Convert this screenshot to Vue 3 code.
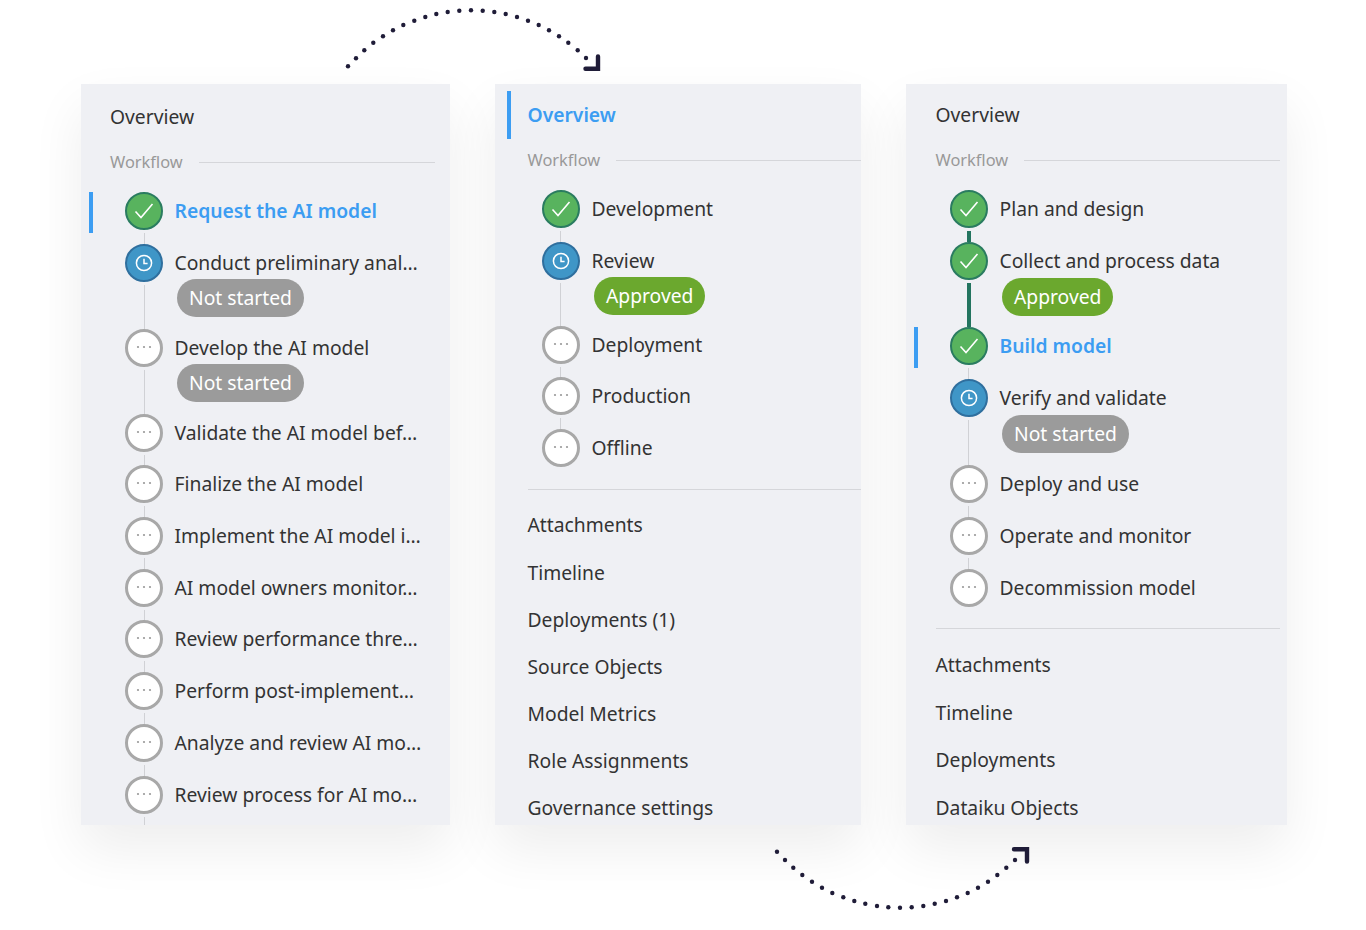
<template>
  <div class="page">
    <section v-for="panel in panels" :key="panel.id" class="panel" :class="panel.id">
      <div class="overview" :class="{ active: panel.overviewActive }">Overview</div>
      <div class="section-head">
        <span>Workflow</span>
        <i></i>
      </div>
      <ul class="steps">
        <li
          v-for="(step, i) in panel.steps"
          :key="step.label"
          class="step"
          :class="{ active: step.active }"
        >
          <div class="rail">
            <span class="dot" :class="step.status">
              <svg v-if="step.status === 'done'" viewBox="0 0 38 38" width="38" height="38">
                <path d="M10.5 19.5 L16 25.5 L27.5 12" fill="none" stroke="#fff" stroke-width="1.6" />
              </svg>
              <svg v-else-if="step.status === 'progress'" viewBox="0 0 38 38" width="38" height="38">
                <circle cx="19" cy="19" r="7.6" fill="none" stroke="#fff" stroke-width="1.5" />
                <path d="M19 14.8 V19.6 H22.6" fill="none" stroke="#fff" stroke-width="1.5" />
              </svg>
              <svg v-else viewBox="0 0 38 38" width="38" height="38">
                <circle cx="13" cy="18" r="1.1" fill="#999" />
                <circle cx="19" cy="18" r="1.1" fill="#999" />
                <circle cx="25" cy="18" r="1.1" fill="#999" />
              </svg>
            </span>
            <span
              v-if="i < panel.steps.length - 1 || panel.tailLine"
              class="line"
              :class="{ strong: step.status === 'done' && panel.steps[i + 1]?.status === 'done' && panel.strongLines }"
            ></span>
          </div>
          <div class="body">
            <div class="label">{{ step.label }}</div>
            <span v-if="step.tag" class="tag" :class="step.tag === 'Approved' ? 'green' : 'grey'">{{ step.tag }}</span>
          </div>
        </li>
      </ul>
      <template v-if="panel.links.length">
        <hr class="rule" />
        <a v-for="link in panel.links" :key="link" class="link">{{ link }}</a>
      </template>
    </section>

    <svg class="arrows" width="1366" height="930" viewBox="0 0 1366 930">
      <circle v-for="(d, i) in topDots" :key="'t' + i" :cx="d[0]" :cy="d[1]" r="2.2" fill="#1f1c38" />
      <circle v-for="(d, i) in bottomDots" :key="'b' + i" :cx="d[0]" :cy="d[1]" r="2.2" fill="#1f1c38" />
      <path d="M585.5 68.8 H598 V56.5" fill="none" stroke="#1f1c38" stroke-width="4.4" stroke-linecap="round" />
      <path d="M1014 849.3 H1027 V861.5" fill="none" stroke="#1f1c38" stroke-width="4.4" stroke-linecap="round" />
    </svg>
  </div>
</template>

<script setup>
const todo = (label, extra = {}) => ({ label, status: 'todo', ...extra })

const panels = [
  {
    id: 'first',
    tailLine: true,
    links: [],
    steps: [
      { label: 'Request the AI model', status: 'done', active: true },
      { label: 'Conduct preliminary anal…', status: 'progress', tag: 'Not started' },
      todo('Develop the AI model', { tag: 'Not started' }),
      todo('Validate the AI model bef…'),
      todo('Finalize the AI model'),
      todo('Implement the AI model i…'),
      todo('AI model owners monitor…'),
      todo('Review performance thre…'),
      todo('Perform post-implement…'),
      todo('Analyze and review AI mo…'),
      todo('Review process for AI mo…'),
    ],
  },
  {
    id: 'second',
    overviewActive: true,
    steps: [
      { label: 'Development', status: 'done' },
      { label: 'Review', status: 'progress', tag: 'Approved' },
      todo('Deployment'),
      todo('Production'),
      todo('Offline'),
    ],
    links: ['Attachments', 'Timeline', 'Deployments (1)', 'Source Objects', 'Model Metrics', 'Role Assignments', 'Governance settings'],
  },
  {
    id: 'third',
    strongLines: true,
    steps: [
      { label: 'Plan and design', status: 'done' },
      { label: 'Collect and process data', status: 'done', tag: 'Approved' },
      { label: 'Build model', status: 'done', active: true },
      { label: 'Verify and validate', status: 'progress', tag: 'Not started' },
      todo('Deploy and use'),
      todo('Operate and monitor'),
      todo('Decommission model'),
    ],
    links: ['Attachments', 'Timeline', 'Deployments', 'Dataiku Objects'],
  },
]

// dot positions read off the reference
const topDots = [
  [348, 66.3], [356, 58.3], [364.3, 50.3], [373.3, 42.7], [383, 36.3], [393, 30.3], [403.3, 25], [414.3, 20.7],
  [425.3, 17], [436.3, 14], [447.7, 12], [459.3, 10.7], [471, 10.3], [482.7, 10.7], [494.3, 12], [505.7, 14],
  [517, 17], [528, 20.7], [538.7, 25], [549, 30.3], [559, 36.3], [568.3, 42.7], [577.7, 50.3], [586, 58],
]
const bottomDots = [
  [777, 851.7], [785, 860], [793.3, 867.7], [802.3, 875], [812, 881.7], [822, 887.7], [832.3, 893], [843.3, 897.3],
  [854.3, 901], [865.3, 903.7], [877, 906], [888.3, 907.3], [900, 907.7], [911.7, 907.3], [923.3, 906], [934.7, 903.7],
  [946, 901], [957, 897.3], [967.7, 893], [978, 887.7], [988, 881.7], [997.3, 875], [1006.3, 867.7], [1015, 860],
]
</script>

<style scoped>
.page {
  position: relative;
  width: 1366px;
  height: 930px;
  box-sizing: border-box;
  padding: 84px 0 0 81px;
  display: flex;
  gap: 45px;
  overflow: hidden;
  font-family: "Noto Sans", sans-serif;
  color: #333;
}

.panel {
  position: relative;
  height: 741px;
  box-sizing: border-box;
  padding-top: 18px;
  background: #eff0f4;
  box-shadow: 0 24px 50px rgba(0, 0, 0, 0.07);
  overflow: hidden;
}

.first {
  width: 369px;
  padding: 20px 15px 0 29px;
}

.second {
  width: 366px;
  padding-left: 32.5px;
}

.third {
  width: 381px;
  padding: 18px 7px 0 29.5px;
}

.overview,
.label,
.link,
.tag {
  font-size: 19.3px;
  line-height: 26px;
  white-space: nowrap;
}

.overview {
  height: 26px;
}

.overview.active {
  color: #3c9df2;
  font-weight: 600;
}

.overview.active::before,
.step.active::before {
  content: "";
  position: absolute;
  width: 4px;
  background: #3c9df2;
}

.overview.active::before {
  left: 12px;
  top: 7px;
  height: 48px;
}

.section-head {
  display: flex;
  align-items: center;
  gap: 16px;
  height: 24px;
  margin-top: 20px;
  font-size: 16.4px;
  color: #999;
}

.section-head span {
  margin-top: -2px;
}

.section-head i {
  flex: 1;
  height: 1px;
  background: #d5d6da;
}

.steps {
  list-style: none;
  margin: 18px 0 0;
  padding: 0 0 0 15px;
}

.second .steps,
.third .steps {
  padding-left: 14px;
}

.step {
  display: flex;
  gap: 11.5px;
  min-height: 51.7px;
}

.second .step,
.third .step {
  gap: 12px;
}

.third .step {
  min-height: 52px;
}

.step.active::before {
  left: 8px;
  height: 41px;
}

.rail {
  display: flex;
  flex-direction: column;
  align-items: center;
  width: 38px;
  flex: none;
}

.dot {
  width: 38px;
  height: 38px;
  flex: none;
  box-sizing: border-box;
  border-radius: 50%;
  border: 2.5px solid;
  display: flex;
  align-items: center;
  justify-content: center;
}

.dot svg {
  flex: none;
}

.dot.done {
  background: #58b35e;
  border-color: #2a7c60;
}

.dot.progress {
  background: #3f96c7;
  border-color: #2f6f9e;
}

.dot.todo {
  background: #fff;
  border: 3px solid #a8a8a8;
}

.line {
  flex: 1;
  width: 1px;
  margin-top: 3px;
  background: #d0d1d5;
}

.line.strong {
  width: 4px;
  background: #23745f;
}

.body {
  padding: 6px 0 12px;
  min-width: 0;
}

.second .body {
  padding-bottom: 11px;
}

.third .body {
  padding-bottom: 11.4px;
}

.tag {
  display: inline-block;
  margin: 3px 0 0 2.5px;
  padding: 6px 12px;
  border-radius: 19px;
  color: #fff;
}

.third .tag {
  margin-top: 4px;
}

.step.active .label {
  color: #3c9df2;
  font-weight: 600;
}

.tag.grey {
  background: #9b9b9b;
}

.tag.green {
  background: #6ba82e;
}

.rule {
  height: 1px;
  margin: 7.5px 0 12px;
  border: 0;
  background: #d5d6da;
}

.second .rule {
  margin-top: 8px;
}

.link {
  display: flex;
  align-items: center;
  height: 47.2px;
}

.third .link {
  height: 47.6px;
}

.arrows {
  position: absolute;
  left: 0;
  top: 0;
  pointer-events: none;
}
</style>
